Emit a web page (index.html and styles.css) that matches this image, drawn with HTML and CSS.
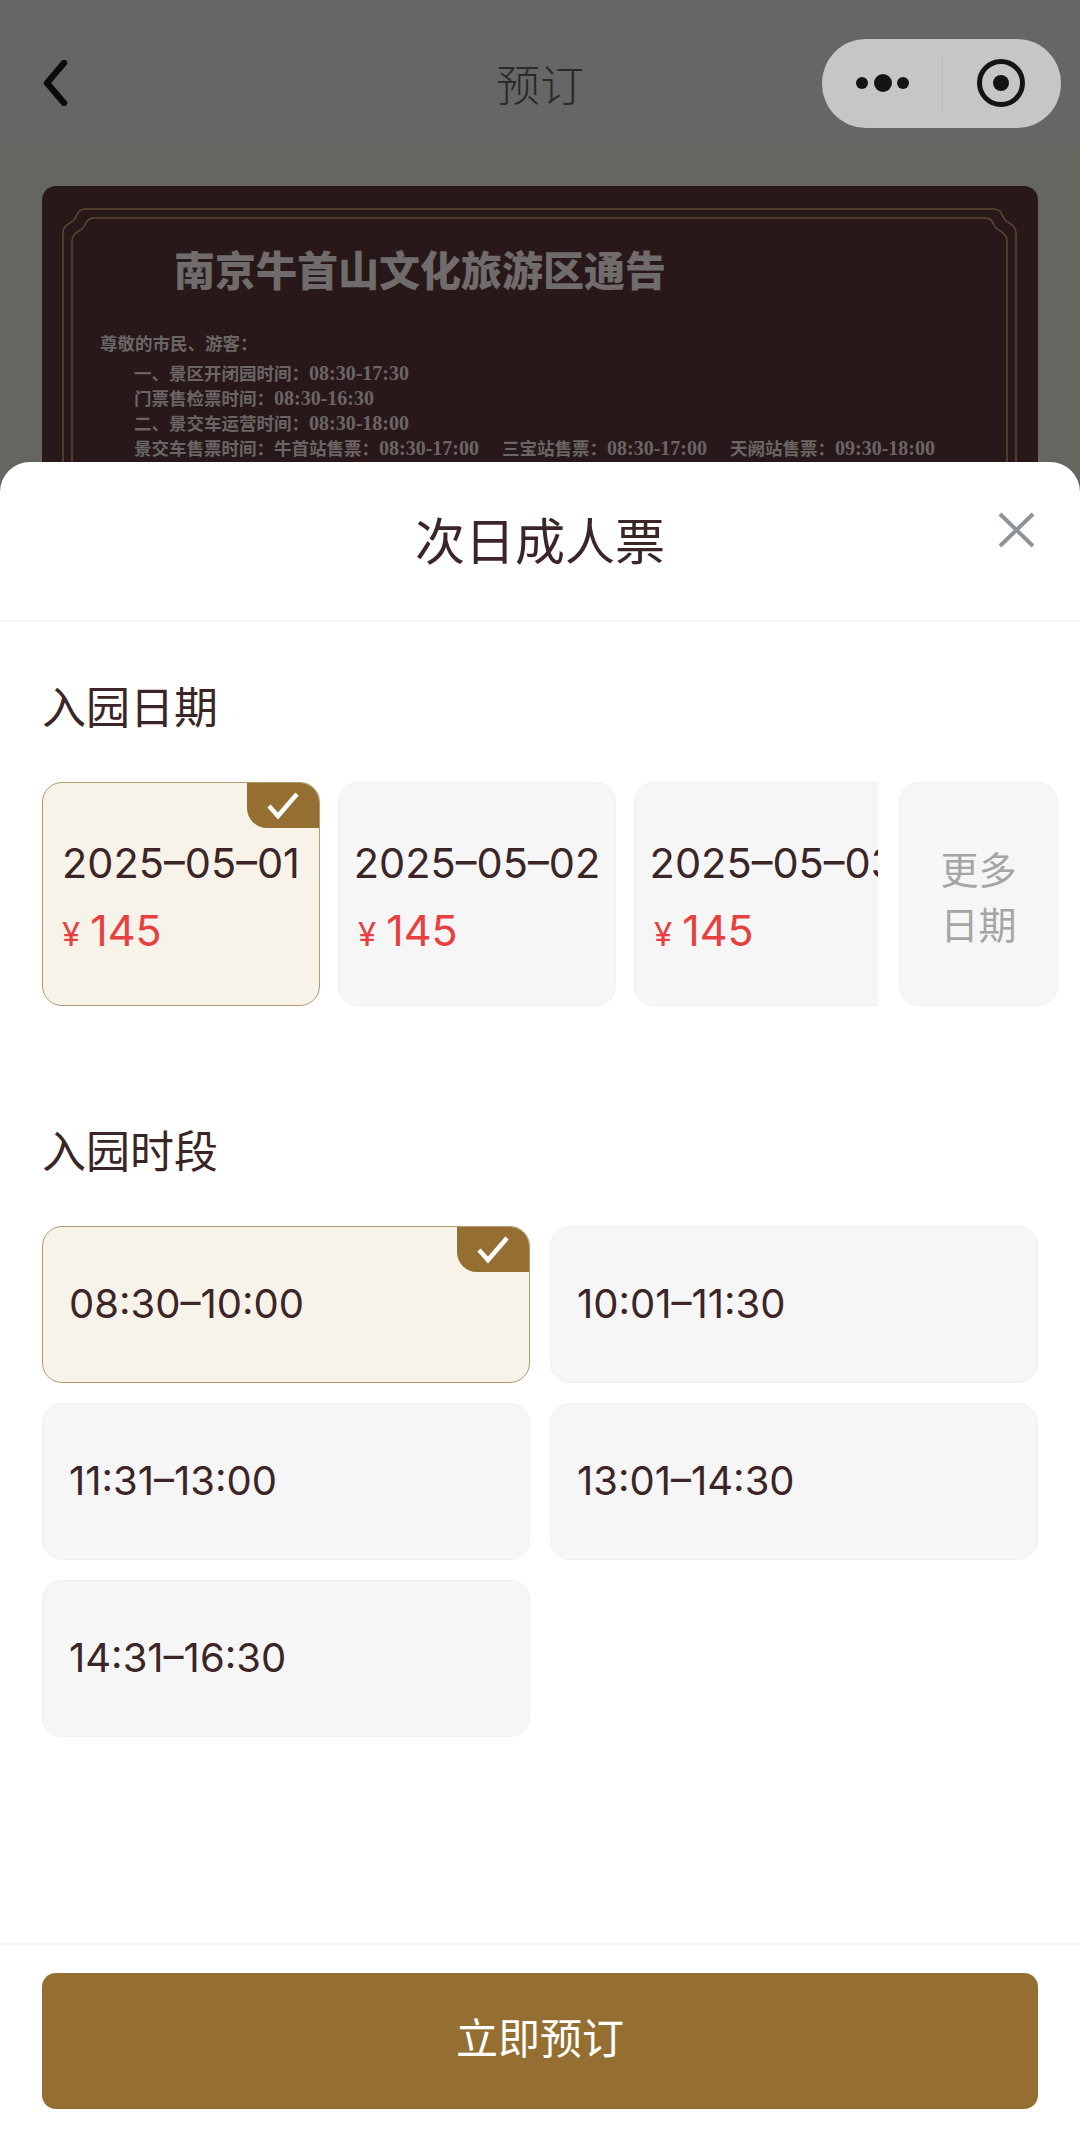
FILE: index.html
```html
<!DOCTYPE html>
<html lang="zh-CN">

<head>
    <meta charset="UTF-8" />
    <title>预订</title>
    <link rel="stylesheet" href="styles.css">
</head>

<body>
    <div class="page">
        <div class="nav">
            <div class="nav-left">
                <svg class="back" width="26" height="46" viewBox="0 0 26 46">
                    <path d="M22 3 L5 23 L22 43" fill="none" stroke="#0b0b0b" stroke-width="6.5" stroke-linecap="round" stroke-linejoin="round" />
                </svg>
            </div>
            <div class="nav-title">预订</div>
            <div class="nav-right">
                <div class="capsule">
                    <svg width="239" height="89" viewBox="0 0 239 89">
                        <circle cx="40" cy="44" r="6" fill="#141414" />
                        <circle cx="61" cy="44" r="9" fill="#141414" />
                        <circle cx="81" cy="44" r="6" fill="#141414" />
                        <path d="M120 17 V73" stroke="#b8b8b8" stroke-width="1" />
                        <circle cx="179" cy="44" r="21.5" fill="none" stroke="#141414" stroke-width="5" />
                        <circle cx="179" cy="44" r="8" fill="#141414" />
                    </svg>
                </div>
            </div>
        </div>

        <div class="backdrop">
            <div class="notice">
                <svg class="notice-frame" width="997" height="290" viewBox="0 0 997 290">
                    <path d="M22 290 V46 C22 38 30 36 33 33 C36 30 36 22 44 22 H953 C961 22 961 30 964 33 C967 36 975 38 975 46 V290" fill="none" stroke="#5d4a2e" stroke-width="1.5" />
                    <path d="M31 290 V54 C31 46 39 44 42 41 C45 38 45 31 53 31 H944 C952 31 952 38 955 41 C958 44 966 46 966 54 V290" fill="none" stroke="#5d4a2e" stroke-width="1.5" />
                </svg>
                <div class="notice-title">南京牛首山文化旅游区通告</div>
                <div class="notice-text">
                    <p class="greet">尊敬的市民、游客：</p>
                    <p>一、景区开闭园时间：<span class="clock">08:30-17:30</span></p>
                    <p>门票售检票时间：<span class="clock">08:30-16:30</span></p>
                    <p>二、景交车运营时间：<span class="clock">08:30-18:00</span></p>
                    <p class="sale"><span>景交车售票时间：牛首站售票：<span class="clock">08:30-17:00</span></span><span>三宝站售票：<span class="clock">08:30-17:00</span></span><span>天阙站售票：<span class="clock">09:30-18:00</span></span></p>
                </div>
            </div>
        </div>

        <div class="sheet">
            <div class="sheet-head">
                <div class="sheet-title">次日成人票</div>
                <svg class="close" width="37" height="36" viewBox="0 0 37 36">
                    <path d="M2 2 L35 34 M35 2 L2 34" fill="none" stroke="#8d9399" stroke-width="4" />
                </svg>
            </div>

            <div class="sheet-body">
                <div class="label">入园日期</div>
                <div class="dates">
                    <div class="date-scroll">
                        <div class="date-card on">
                            <div class="tick">
                                <svg width="72" height="45" viewBox="0 0 72 45">
                                    <path d="M22 23 L31 33 L50 11" fill="none" stroke="#fff" stroke-width="4.5" />
                                </svg>
                            </div>
                            <div class="date-text">2025–05–01</div>
                            <div class="price"><span class="yen">¥</span>145</div>
                        </div>
                        <div class="date-card">
                            <div class="date-text">2025–05–02</div>
                            <div class="price"><span class="yen">¥</span>145</div>
                        </div>
                        <div class="date-card">
                            <div class="date-text">2025–05–03</div>
                            <div class="price"><span class="yen">¥</span>145</div>
                        </div>
                    </div>
                    <div class="date-more">更多<br>日期</div>
                </div>

                <div class="label label-time">入园时段</div>
                <div class="times">
                    <div class="time-card on">
                        <div class="tick">
                            <svg width="72" height="45" viewBox="0 0 72 45">
                                <path d="M22 23 L31 33 L50 11" fill="none" stroke="#fff" stroke-width="4.5" />
                            </svg>
                        </div>
                        08:30–10:00
                    </div>
                    <div class="time-card">10:01–11:30</div>
                    <div class="time-card">11:31–13:00</div>
                    <div class="time-card">13:01–14:30</div>
                    <div class="time-card">14:31–16:30</div>
                </div>
            </div>

            <div class="sheet-foot">
                <div class="book-btn">立即预订</div>
            </div>
        </div>
    </div>
</body>

</html>
```

FILE: styles.css
```css
* {
    margin: 0;
    padding: 0;
    box-sizing: border-box;
}

body {
    width: 1080px;
    height: 2154px;
    overflow: hidden;
    font-family: Inter, "Noto Sans CJK SC", sans-serif;
    color: #3c2526;
}

.page {
    position: relative;
    height: 2154px;
    background-color: #666661;
}

/* top bar */
.nav {
    display: grid;
    grid-template-columns: 1fr auto 1fr;
    align-items: center;
    height: 146px;
    padding-top: 20px;
    background-color: #666;
}

.nav-left {
    padding-left: 42px;
}

.back {
    display: block;
}

.nav-title {
    font-size: 44px;
    font-weight: 300;
    color: #2a2a2a;
}

.nav-right {
    display: flex;
    justify-content: flex-end;
    padding-right: 19px;
}

.capsule {
    width: 239px;
    height: 89px;
    border-radius: 44px;
    background-color: #c6c6c6;
}

/* notice behind the sheet */
.backdrop {
    padding: 40px 42px 0;
}

.notice {
    position: relative;
    height: 320px;
    padding: 61px 0 0 58px;
    border-radius: 14px;
    background-color: #281819;
    color: #6a6665;
    font-family: "Liberation Serif", "Noto Sans CJK SC", serif;
}

.notice-frame {
    position: absolute;
    left: -1px;
    top: 1px;
}

.notice-title {
    margin-left: 74px;
    font-size: 41px;
    font-weight: 900;
    line-height: 50px;
    color: #6f6c6b;
}

.notice-text {
    margin-top: 35px;
    font-size: 17.5px;
    font-weight: 700;
    line-height: 25px;
}

.notice-text p {
    padding-left: 34px;
    white-space: nowrap;
}

.notice-text .greet {
    margin-bottom: 5px;
    padding-left: 0;
}

.clock {
    font-size: 20px;
    line-height: 0;
}

.sale {
    display: flex;
    gap: 23px;
}

/* bottom sheet */
.sheet {
    position: absolute;
    left: 0;
    right: 0;
    bottom: 0;
    display: flex;
    flex-direction: column;
    height: 1692px;
    border-radius: 30px 30px 0 0;
    background-color: #fff;
}

.sheet-head {
    position: relative;
    height: 160px;
    border-bottom: 2px solid #f6f6f6;
}

.sheet-title {
    font-size: 50px;
    line-height: 160px;
    text-align: center;
}

.close {
    position: absolute;
    right: 45px;
    top: 50px;
}

.sheet-body {
    padding: 56px 42px 0;
}

.label {
    font-size: 44px;
    line-height: 60px;
}

.label-time {
    margin-top: 116px;
}

.dates {
    display: flex;
    gap: 21px;
    width: 1016px;
    margin-top: 44px;
}

.date-scroll {
    display: flex;
    flex: 0 0 836px;
    gap: 18px;
    overflow: hidden;
}

.date-card {
    position: relative;
    flex: 0 0 278px;
    height: 224px;
    padding-top: 50px;
    border: 1px solid #f0f0f0;
    border-radius: 20px;
    background-color: #f6f6f6;
    overflow: hidden;
}

.date-text {
    display: flex;
    justify-content: center;
    font-size: 41.5px;
    line-height: 60px;
    white-space: nowrap;
}

.price {
    margin-top: 7px;
    padding-left: 19px;
    font-size: 43px;
    line-height: 60px;
    color: #e8403f;
}

.yen {
    margin-right: 10px;
    font-size: 33px;
}

.date-more {
    flex: 0 0 159px;
    height: 224px;
    padding-top: 60px;
    border: 1px solid #f0f0f0;
    border-radius: 20px;
    background-color: #f6f6f6;
    font-size: 38px;
    line-height: 55px;
    text-align: center;
    color: #a5a5a5;
}

.times {
    display: grid;
    grid-template-columns: 488px 488px;
    grid-auto-rows: 157px;
    gap: 20px;
    margin-top: 44px;
}

.time-card {
    position: relative;
    display: flex;
    align-items: center;
    padding: 0 0 2px 26px;
    border: 1px solid #f0f0f0;
    border-radius: 20px;
    background-color: #f6f6f6;
    font-size: 40px;
    overflow: hidden;
}

.on {
    border-color: #b09a6e;
    background-color: #f8f3e9;
}

.tick {
    position: absolute;
    right: 0;
    top: 0;
    width: 72px;
    height: 45px;
    border-radius: 0 0 0 20px;
    background-color: #946f31;
}

.tick svg {
    display: block;
}

.sheet-foot {
    margin-top: auto;
    padding: 28px 42px 45px;
    border-top: 2px solid #f6f6f6;
}

.book-btn {
    height: 136px;
    padding-bottom: 4px;
    border-radius: 14px;
    background-color: #946f31;
    font-size: 42px;
    line-height: 132px;
    text-align: center;
    color: #fff;
}
```
